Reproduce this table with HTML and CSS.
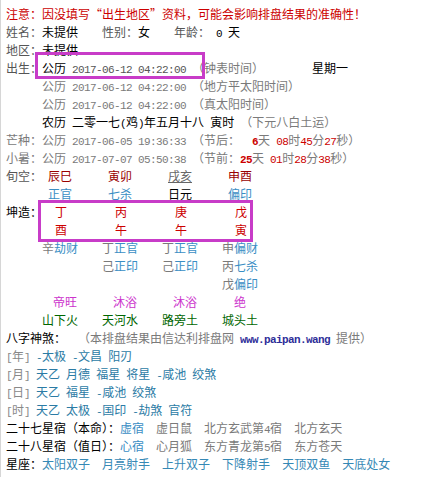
FILE: index.html
```html
<!DOCTYPE html>
<html lang="zh-CN">
<head>
<meta charset="utf-8">
<title>排盘</title>
<link rel="stylesheet" href="styles.css">
</head>
<body>
<div class="page">
  <div class="row notice">注意：因没填写<span class="ql">“</span>出生地区<span class="qr">”</span>资料，可能会影响排盘结果的准确性！</div>
  <div class="row"><span class="lb">姓名：</span>未提供<span class="lb g24">性别：</span>女<span class="lb g24">年龄：</span><span class="m"> 0 </span>天</div>
  <div class="row"><span class="lb">地区：</span>未提供</div>
  <div class="row"><span class="lb">出生：</span><span class="hl">公历<span class="m dk"> 2017-06-12 04:22:00 </span></span><span class="gr">（钟表时间）</span><span class="wk">星期一</span></div>
  <div class="row ind gr">公历<span class="m"> 2017-06-12 04:22:00 </span>（地方平太阳时间）</div>
  <div class="row ind gr">公历<span class="m"> 2017-06-12 04:22:00 </span>（真太阳时间）</div>
  <div class="row ind">农历<span class="m"> </span>二零一七<span class="m">(</span>鸡<span class="m">)</span>年五月十八<span class="m"> </span>寅时<span class="m"> </span><span class="gr">（下元八白土运）</span></div>
  <div class="row"><span class="gr">芒种：公历<span class="m"> 2017-06-05 19:36:33 </span>（节后：<span class="m">  </span></span><b class="m rb">6</b><span class="gr">天<span class="m"> </span></span><span class="m rd">08</span><span class="gr">时</span><span class="m rd">45</span><span class="gr">分</span><span class="m rd">27</span><span class="gr">秒）</span></div>
  <div class="row"><span class="gr">小暑：公历<span class="m"> 2017-07-07 05:50:38 </span>（节前：</span><b class="m rb">25</b><span class="gr">天<span class="m"> </span></span><span class="m rd">01</span><span class="gr">时</span><span class="m rd">28</span><span class="gr">分</span><span class="m rd">38</span><span class="gr">秒）</span></div>

  <div class="pr">
    <span class="lb">旬空：</span>
    <span class="c-l dr">辰巳</span>
    <span class="c-l dr">寅卯</span>
    <span class="c-l ul">戌亥</span>
    <span class="c-l dr">申酉</span>
  </div>
  <div class="pr">
    <span></span>
    <span class="c-l bl">正官</span>
    <span class="c-l bl">七杀</span>
    <span class="c-l">日元</span>
    <span class="c-l bl">偏印</span>
  </div>
  <div class="bz">
    <div class="pr">
      <span>坤造：</span>
      <span class="c-p rd">丁</span>
      <span class="c-p rd">丙</span>
      <span class="c-p rd">庚</span>
      <span class="c-p rd">戊</span>
    </div>
    <div class="pr">
      <span></span>
      <span class="c-p rd">酉</span>
      <span class="c-p rd">午</span>
      <span class="c-p rd">午</span>
      <span class="c-p rd">寅</span>
    </div>
  </div>
  <div class="pr">
    <span></span>
    <span class="c-r"><span class="gr">辛</span><span class="bl">劫财</span></span>
    <span class="c-r"><span class="gr">丁</span><span class="bl">正官</span></span>
    <span class="c-r"><span class="gr">丁</span><span class="bl">正官</span></span>
    <span class="c-r"><span class="gr">申</span><span class="bl">偏财</span></span>
  </div>
  <div class="pr">
    <span></span>
    <span></span>
    <span class="c-r"><span class="gr">己</span><span class="bl">正印</span></span>
    <span class="c-r"><span class="gr">己</span><span class="bl">正印</span></span>
    <span class="c-r"><span class="gr">丙</span><span class="bl">七杀</span></span>
  </div>
  <div class="pr">
    <span></span>
    <span></span>
    <span></span>
    <span></span>
    <span class="c-r"><span class="gr">戊</span><span class="bl">偏印</span></span>
  </div>
  <div class="pr">
    <span></span>
    <span class="c-r mg">帝旺</span>
    <span class="c-r mg">沐浴</span>
    <span class="c-r mg">沐浴</span>
    <span class="c-j mg">绝</span>
  </div>
  <div class="pr">
    <span></span>
    <span class="c-r gn">山下火</span>
    <span class="c-r gn">天河水</span>
    <span class="c-r gn">路旁土</span>
    <span class="c-r gn">城头土</span>
  </div>

  <div class="row">八字神煞：<span class="m">  </span><span class="gr">（本排盘结果由信达利排盘网<span class="m"> </span><span class="m url">www.paipan.wang</span><span class="m"> </span>提供）</span></div>
  <div class="row"><span class="bk"><span class="m">[</span>年<span class="m">]</span></span><span class="m"> </span><span class="ss"><span class="m">-</span>太极<span class="m"> -</span>文昌<span class="m"> </span>阳刃</span></div>
  <div class="row"><span class="bk"><span class="m">[</span>月<span class="m">]</span></span><span class="m"> </span><span class="ss">天乙<span class="m"> </span>月德<span class="m"> </span>福星<span class="m"> </span>将星<span class="m"> -</span>咸池<span class="m"> </span>绞煞</span></div>
  <div class="row"><span class="bk"><span class="m">[</span>日<span class="m">]</span></span><span class="m"> </span><span class="ss">天乙<span class="m"> </span>福星<span class="m"> -</span>咸池<span class="m"> </span>绞煞</span></div>
  <div class="row"><span class="bk"><span class="m">[</span>时<span class="m">]</span></span><span class="m"> </span><span class="ss">天乙<span class="m"> </span>太极<span class="m"> -</span>国印<span class="m"> -</span>劫煞<span class="m"> </span>官符</span></div>
  <div class="row">二十七星宿（本命）：<span class="bl">虚宿</span><span class="m">  </span><span class="gr">虚日鼠<span class="m">  </span>北方玄武第<span class="m">4</span>宿<span class="m">  </span>北方玄天</span></div>
  <div class="row">二十八星宿（值日）：<span class="bl">心宿</span><span class="m">  </span><span class="gr">心月狐<span class="m">  </span>东方青龙第<span class="m">5</span>宿<span class="m">  </span>东方苍天</span></div>
  <div class="row">星座：<span class="xz">太阳双子<span class="m">  </span>月亮射手<span class="m">  </span>上升双子<span class="m">  </span>下降射手<span class="m">  </span>天顶双鱼<span class="m">  </span>天底处女</span></div>
</div>
</body>
</html>
```
FILE: styles.css
```css
html, body {
  margin: 0;
  padding: 0;
  background: #fff;
}
body {
  font-family: "Noto Sans CJK SC", sans-serif;
  font-size: 12px;
  line-height: 18px;
  color: #000;
}
.page {
  border-left: 1px solid #d6d6d6;
  min-height: 100vh;
  box-sizing: border-box;
  padding: 5px 0 0 5px;
}
.row {
  height: 18px;
  white-space: nowrap;
}
.m {
  font-family: "Liberation Mono", monospace;
  font-size: 11px;
  letter-spacing: -0.6px;
  white-space: pre;
}
.notice { color: #cc0000; }
.ql, .qr {
  display: inline-block;
  width: 12px;
}
.ql { text-align: right; }
.qr { text-align: left; }
.lb { color: #555; }
.g24 { margin-left: 24px; }
.gr { color: #7a7a7a; }
.dk { color: #555; }
.ind { padding-left: 36px; }
.wk { margin-left: 48px; color: #000; }
.hl { position: relative; }
.hl::before {
  content: "";
  position: absolute;
  left: -7px;
  right: -13px;
  top: -7px;
  bottom: -3px;
  border: 3px solid #c83cc8;
}
.rb { color: #cc0000; font-weight: bold; }
.rd { color: #cc3333; }

.pr {
  display: grid;
  grid-template-columns: 36px repeat(4, 60px);
  height: 18px;
  white-space: nowrap;
}
.c-l { padding-left: 6px; }
.c-p { padding-left: 13px; }
.c-r { text-align: right; padding-right: 25px; }
.c-j { padding-left: 12px; }
.dr { color: #990000; }
.ul { color: #666; text-decoration: underline; }
.bl { color: #3a8ec4; }
.rd { color: #cc0000; }
.mg { color: #cc33cc; }
.gn { color: #006600; }
.bz { position: relative; }
.bz::after {
  content: "";
  position: absolute;
  left: 32px;
  top: -3px;
  width: 215px;
  height: 42px;
  box-sizing: border-box;
  border: 3px solid #c83cc8;
}
.url { color: #2e2e99; font-weight: bold; }
.bk { color: #888; }
.ss { color: #2b7ba5; }
.xz { color: #3588b5; }
```
